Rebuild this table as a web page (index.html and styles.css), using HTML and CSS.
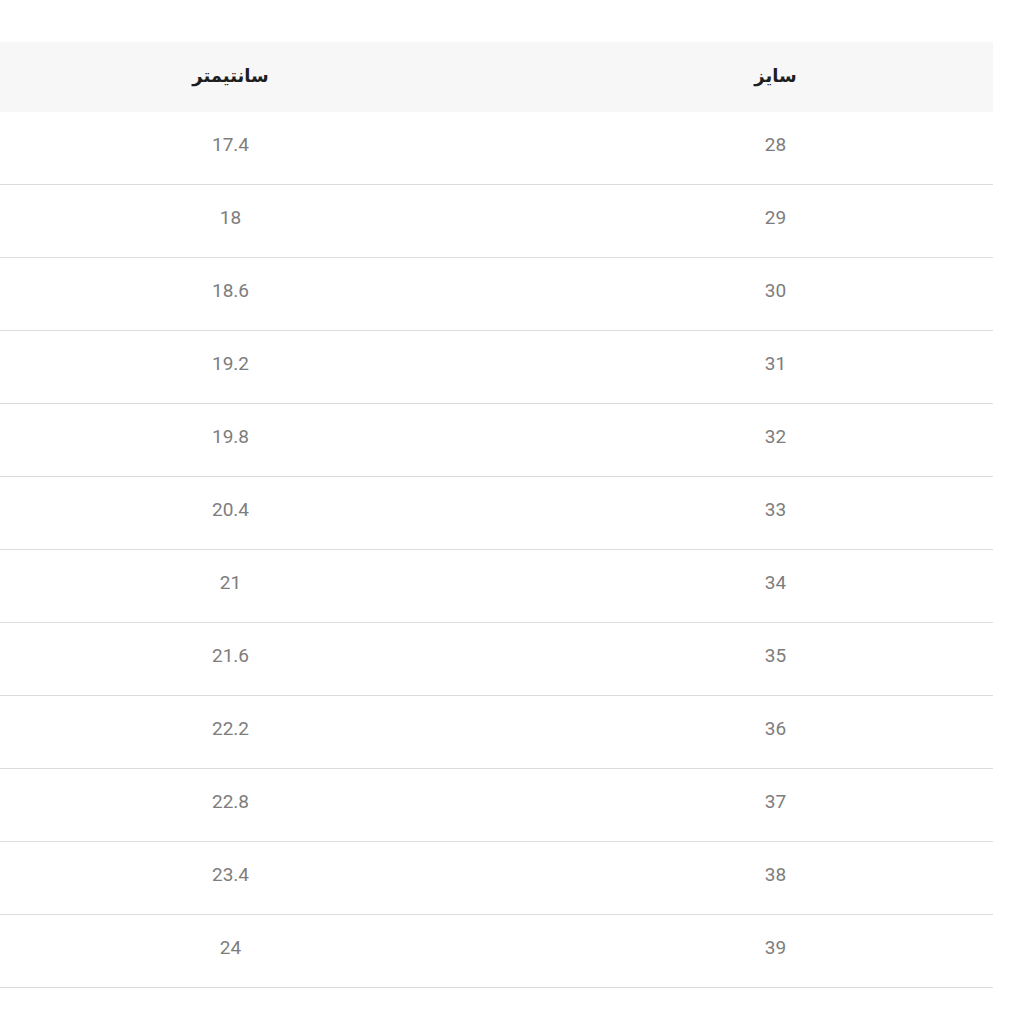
FILE: index.html
```html
<!DOCTYPE html>
<html lang="fa" dir="rtl">
<head>
<meta charset="utf-8">
<link rel="stylesheet" href="styles.css">
</head>
<body>
<div class="wrap">
<table class="size-table">
<thead>
<tr><th>سایز</th><th>سانتیمتر</th></tr>
</thead>
<tbody>
<tr><td>28</td><td>17.4</td></tr>
<tr><td>29</td><td>18</td></tr>
<tr><td>30</td><td>18.6</td></tr>
<tr><td>31</td><td>19.2</td></tr>
<tr><td>32</td><td>19.8</td></tr>
<tr><td>33</td><td>20.4</td></tr>
<tr><td>34</td><td>21</td></tr>
<tr><td>35</td><td>21.6</td></tr>
<tr><td>36</td><td>22.2</td></tr>
<tr><td>37</td><td>22.8</td></tr>
<tr><td>38</td><td>23.4</td></tr>
<tr><td>39</td><td>24</td></tr>
</tbody>
</table>
</div>
</body>
</html>
```
FILE: styles.css
```css
html, body {
  margin: 0;
  padding: 0;
  background: #fff;
  overflow: hidden;
}
body {
  width: 1024px;
  height: 1024px;
  font-family: Roboto, "DejaVu Sans", sans-serif;
}
.wrap {
  padding-top: 42px;
  padding-right: 31px;
}
.size-table {
  width: 1090px;
  border-collapse: collapse;
  table-layout: fixed;
}
.size-table th {
  height: 66px;
  padding: 0 0 4px 110px;
  background: #f7f7f7;
  font-family: "DejaVu Sans", sans-serif;
  font-weight: bold;
  font-size: 18px;
  color: #1e1e1e;
  text-align: center;
}
.size-table td {
  height: 65px;
  padding: 0 0 7px 110px;
  text-align: center;
  font-size: 19px;
  color: #7d7d7d;
  border-bottom: 1px solid #dcdcdc;
}
```
